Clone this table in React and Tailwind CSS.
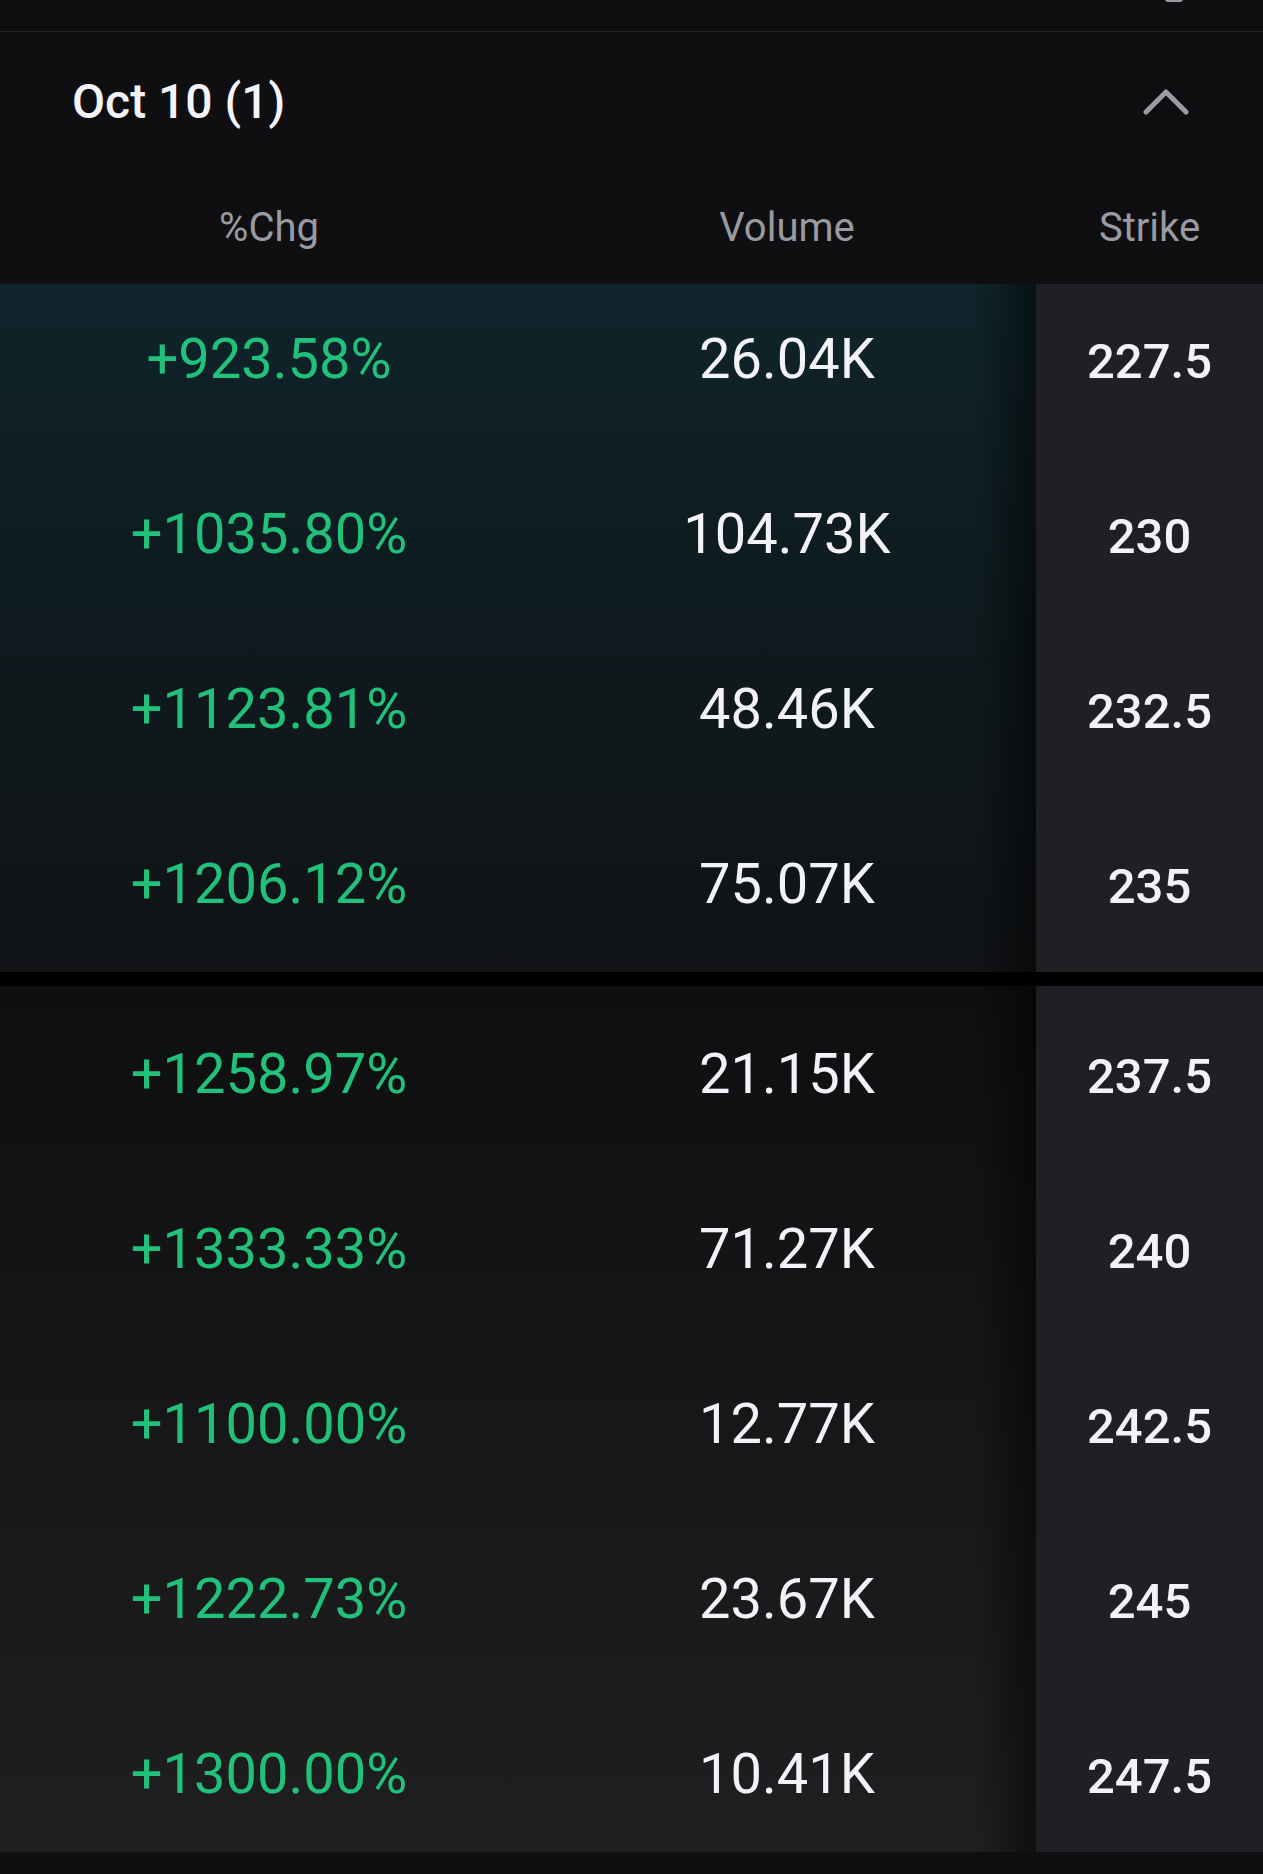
const groupA = [
  { chg: '+923.58%', vol: '26.04K', strike: '227.5' },
  { chg: '+1035.80%', vol: '104.73K', strike: '230' },
  { chg: '+1123.81%', vol: '48.46K', strike: '232.5' },
  { chg: '+1206.12%', vol: '75.07K', strike: '235' },
]

const groupB = [
  { chg: '+1258.97%', vol: '21.15K', strike: '237.5' },
  { chg: '+1333.33%', vol: '71.27K', strike: '240' },
  { chg: '+1100.00%', vol: '12.77K', strike: '242.5' },
  { chg: '+1222.73%', vol: '23.67K', strike: '245' },
  { chg: '+1300.00%', vol: '10.41K', strike: '247.5' },
]

function Row({ row }) {
  return (
    <div className="flex h-[175px]">
      <div className="grid grid-cols-[538px_498px] items-center w-[1036px]">
        <div className="text-center text-[56px] text-[#22c17b] leading-none">{row.chg}</div>
        <div className="text-center text-[56px] text-[#f2f2f7] leading-none">{row.vol}</div>
      </div>
      <div className="flex items-center justify-center w-[227px] pt-[5px]">
        <span className="text-[49px] font-medium text-[#f2f2f7] leading-none">{row.strike}</span>
      </div>
    </div>
  )
}

// list is scrolled a bit, so rows get clipped at the group edges
function Group({ rows, bg, height, offset }) {
  return (
    <div className={`relative overflow-hidden ${height}`}>
      <div className="absolute inset-0 flex">
        <div className={`relative w-[1036px] ${bg}`}>
          <div className="absolute top-0 right-0 bottom-0 w-[60px] bg-gradient-to-r from-transparent to-black/50" />
        </div>
        <div className="w-[227px] bg-[#202024]" />
      </div>
      <div className={`relative ${offset}`}>
        {rows.map((r) => (
          <Row key={r.strike} row={r} />
        ))}
      </div>
    </div>
  )
}

export default function App() {
  return (
    <div className="w-[1263px] h-[1874px] bg-[#0f0f11] font-['Roboto',sans-serif] overflow-hidden">
      {/* Top bar */}
      <div className="relative h-[32px] border-b border-[#232326]">
        <div className="absolute left-[1165px] -top-[6px] w-[18px] h-[8px] rounded-b-[3px] border-2 border-[#9b9ba3]" />
      </div>

      {/* Expiry header */}
      <div className="flex items-center justify-between h-[140px] pl-[72px] pr-[74px]">
        <span className="text-[48px] font-medium text-[#f4f4f8] leading-none">Oct 10 (1)</span>
        <svg width="46" height="28" viewBox="0 0 46 28" fill="none">
          <path d="M3 24 L23 4 L43 24" stroke="#9b9ba3" strokeWidth="5" strokeLinecap="round" strokeLinejoin="round" />
        </svg>
      </div>

      {/* Column headers */}
      <div className="grid grid-cols-[538px_498px_227px] items-center h-[112px] text-[40px] text-[#9a9aa2] leading-none">
        <div className="text-center">%Chg</div>
        <div className="text-center">Volume</div>
        <div className="text-center">Strike</div>
      </div>

      <Group rows={groupA} bg="bg-gradient-to-b from-[#0f242b] via-[#0e1a1e] to-[#111316]" height="h-[688px]" offset="-mt-[13px]" />
      <div className="h-[14px] bg-black" />
      <Group rows={groupB} bg="bg-gradient-to-b from-[#0e0f11] to-[#1f1f22]" height="h-[866px]" offset="mt-0" />
    </div>
  )
}
